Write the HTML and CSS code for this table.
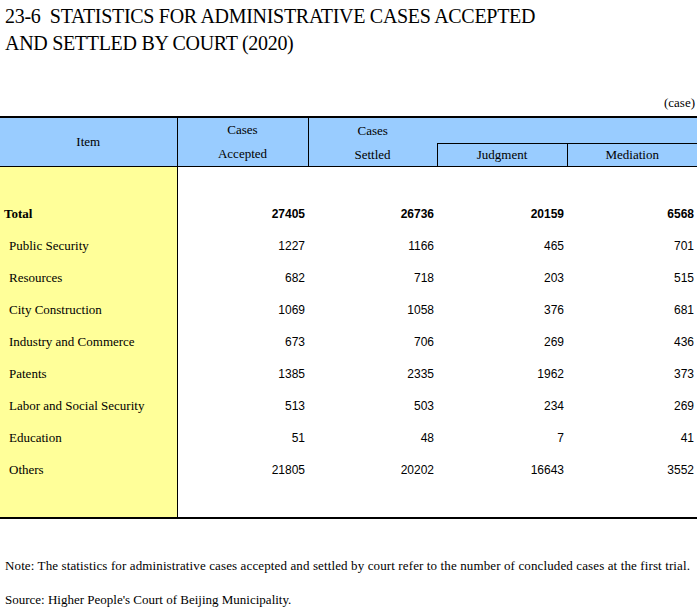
FILE: index.html
```html
<!DOCTYPE html>
<html>
<head>
<meta charset="utf-8">
<link rel="stylesheet" href="styles.css">
</head>
<body>
<h1 class="title">23-6&nbsp; STATISTICS FOR ADMINISTRATIVE CASES ACCEPTED<br>AND SETTLED BY COURT (2020)</h1>
<div class="unit">(case)</div>
<table class="stats">
  <colgroup>
    <col class="c1"><col class="c2"><col class="c3"><col class="c4"><col class="c5">
  </colgroup>
  <thead>
    <tr class="h1row">
      <th rowspan="2" class="item">Item</th>
      <th rowspan="2" class="acc">Cases<br>Accepted</th>
      <th class="set-top">Cases</th>
      <th colspan="2" class="sub-top"></th>
    </tr>
    <tr class="h2row">
      <th class="set-bot">Settled</th>
      <th class="sub">Judgment</th>
      <th class="sub last">Mediation</th>
    </tr>
  </thead>
  <tbody>
    <tr class="spacer"><td class="label"></td><td></td><td></td><td></td><td></td></tr>
    <tr class="total"><td class="label">Total</td><td>27405</td><td>26736</td><td>20159</td><td>6568</td></tr>
    <tr><td class="label ind">Public Security</td><td>1227</td><td>1166</td><td>465</td><td>701</td></tr>
    <tr><td class="label ind">Resources</td><td>682</td><td>718</td><td>203</td><td>515</td></tr>
    <tr><td class="label ind">City Construction</td><td>1069</td><td>1058</td><td>376</td><td>681</td></tr>
    <tr><td class="label ind">Industry and Commerce</td><td>673</td><td>706</td><td>269</td><td>436</td></tr>
    <tr><td class="label ind">Patents</td><td>1385</td><td>2335</td><td>1962</td><td>373</td></tr>
    <tr><td class="label ind">Labor and Social Security</td><td>513</td><td>503</td><td>234</td><td>269</td></tr>
    <tr><td class="label ind">Education</td><td>51</td><td>48</td><td>7</td><td>41</td></tr>
    <tr><td class="label ind">Others</td><td>21805</td><td>20202</td><td>16643</td><td>3552</td></tr>
    <tr class="spacer"><td class="label"></td><td></td><td></td><td></td><td></td></tr>
  </tbody>
</table>
<p class="note">Note: The statistics for administrative cases accepted and settled by court refer to the number of concluded cases at the first trial.</p>
<p class="note source">Source: Higher People's Court of Beijing Municipality.</p>
</body>
</html>
```
FILE: styles.css
```css
html, body {
  margin: 0;
  padding: 0;
  background: #ffffff;
  color: #000000;
}

body {
  width: 698px;
  font-family: "Liberation Serif", "Times New Roman", serif;
}

.title {
  margin: 3px 0 0 5px;
  font-size: 20px;
  font-weight: normal;
  line-height: 27px;
  letter-spacing: -0.3px;
}

.unit {
  margin-top: 36px;
  height: 20px;
  line-height: 20px;
  padding-right: 3px;
  text-align: right;
  font-size: 13px;
}

.stats {
  margin-top: 3px;
  width: 697px;
  table-layout: fixed;
  border-collapse: collapse;
  border-top: 2px solid #000;
  border-bottom: 2px solid #000;
}

.c1 { width: 177px; }
.c2 { width: 131px; }
.c3 { width: 129px; }
.c4 { width: 130px; }
.c5 { width: 130px; }

.stats th {
  background: #99ccff;
  font-weight: normal;
  font-size: 13px;
  padding: 0;
  text-align: center;
  vertical-align: middle;
}

.h1row th { height: 23px; }
.h2row th { height: 21px; }

.stats thead tr.h2row th { border-bottom: 1px solid #000; }

.item, .acc { border-bottom: 1px solid #000; line-height: 24px; }
.item { border-right: 1px solid #000; }
.acc { border-right: 1px solid #000; }
.set-top { padding-bottom: 2px; }
.sub-top { border-bottom: 1px solid #000; }
.sub { border-left: 1px solid #000; }

.stats td {
  height: 32px;
  padding: 0 3px 0 0;
  font-family: "Liberation Sans", Arial, sans-serif;
  font-size: 12px;
  text-align: right;
  vertical-align: middle;
}

.stats tr.spacer td { height: 31px; }

.stats td.label {
  background: #ffff99;
  border-right: 1px solid #000;
  font-family: "Liberation Serif", "Times New Roman", serif;
  font-size: 13px;
  text-align: left;
  padding: 0 0 0 4px;
}

.stats td.label.ind { padding-left: 9px; }

.total td { font-weight: bold; }

.note {
  margin: 0;
  padding-left: 5px;
  font-size: 13px;
  line-height: 16px;
}

.note:first-of-type { margin-top: 39px; letter-spacing: 0.12px; }
.source { margin-top: 18px; }
```
